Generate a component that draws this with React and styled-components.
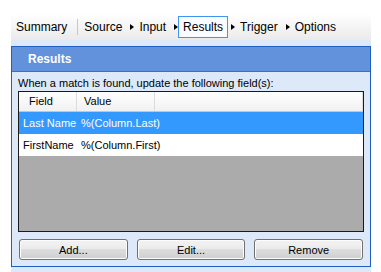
import { Fragment } from "react";
import styled, { createGlobalStyle } from "styled-components";

const GlobalStyle = createGlobalStyle`
  body {
    margin: 0;
    background: #ffffff;
    font-family: "Liberation Sans", Arial, sans-serif;
  }
`;

const Page = styled.div`
  padding: 14px 0 0 11px;
`;

const Frame = styled.div`
  width: 360px;
  height: 258px;
  background: #dde9f8;
  display: flex;
  flex-direction: column;
`;

const Steps = styled.div`
  height: 26px;
  display: flex;
  align-items: center;
  background: linear-gradient(#ffffff, #eaeaea);
  font-size: 12px;
  color: #000000;
`;

const Step = styled.div`
  padding: 3px 4px;
  border: 1px solid ${(p) => (p.$active ? "#3f96f0" : "transparent")};
  background: ${(p) => (p.$active ? "#fafcff" : "transparent")};
  line-height: 14px;
`;

const Divider = styled.span`
  width: 1px;
  height: 16px;
  margin: 0 1px 0 5px;
  background: #c8c8c8;
`;

const Arrow = styled.span`
  width: 0;
  height: 0;
  margin: 0 0 0 3px;
  border-left: 4px solid #000000;
  border-top: 3px solid transparent;
  border-bottom: 3px solid transparent;
`;

const Panel = styled.section`
  margin-top: 6px;
  height: 221px;
  box-sizing: border-box;
  border: 1px solid #1f5fc4;
  display: flex;
  flex-direction: column;
`;

const Header = styled.div`
  height: 24px;
  border-bottom: 1px solid #3c70c8;
  background: #6392dd;
  color: #ffffff;
  font-weight: bold;
  font-size: 12px;
  line-height: 24px;
  padding-left: 16px;
`;

const Note = styled.div`
  font-size: 11px;
  line-height: 14px;
  padding: 4px 6px 1px;
  color: #000000;
`;

const ListBox = styled.div`
  margin: 0 6px;
  height: 139px;
  border: 1px solid #1a1a1a;
  background: #ababab;
  display: flex;
  flex-direction: column;
  font-size: 11px;
`;

const Columns = styled.div`
  display: grid;
  grid-template-columns: 58px 78px 1fr;
`;

const HeadRow = styled(Columns)`
  height: 19px;
  border-bottom: 1px solid #c6c6c6;
  background: linear-gradient(#ffffff, #f1f1f1);
`;

const HeadCell = styled.div`
  line-height: 19px;
  padding-left: ${(p) => p.$indent}px;
  border-right: 1px solid #dcdcdc;
`;

const Row = styled(Columns)`
  height: 22px;
  line-height: 22px;
  background: ${(p) => (p.$selected ? "#3399ff" : "#ffffff")};
  color: ${(p) => (p.$selected ? "#ffffff" : "#000000")};
`;

const Cell = styled.div`
  padding-left: ${(p) => p.$indent}px;
  white-space: nowrap;
`;

const Buttons = styled.div`
  display: grid;
  grid-template-columns: repeat(3, 1fr);
  gap: 9px;
  padding: 7px 7px 0;
`;

const Button = styled.button`
  height: 21px;
  border: 1px solid #707070;
  border-radius: 3px;
  background: linear-gradient(#f3f3f3 0%, #ebebeb 45%, #dddddd 50%, #cfcfcf 100%);
  box-shadow: inset 0 0 0 1px #fcfcfc;
  font-family: "Liberation Sans", Arial, sans-serif;
  font-size: 11px;
  color: #000000;
  padding: 0;
`;

const steps = ["Source", "Input", "Results", "Trigger", "Options"];

const rows = [
  { field: "Last Name", value: "%(Column.Last)", selected: true },
  { field: "FirstName", value: "%(Column.First)", selected: false },
];

export default function App() {
  return (
    <Page>
      <GlobalStyle />
      <Frame>
        <Steps>
          <Step>Summary</Step>
          <Divider />
          {steps.map((name, i) => (
            <Fragment key={name}>
              {i > 0 && <Arrow />}
              <Step $active={name === "Results"}>{name}</Step>
            </Fragment>
          ))}
        </Steps>

        <Panel>
          <Header>Results</Header>
          <Note>When a match is found, update the following field(s):</Note>
          <ListBox>
            <HeadRow>
              <HeadCell $indent={10}>Field</HeadCell>
              <HeadCell $indent={7}>Value</HeadCell>
              <HeadCell $indent={0} />
            </HeadRow>
            {rows.map((row) => (
              <Row key={row.field} $selected={row.selected}>
                <Cell $indent={4}>{row.field}</Cell>
                <Cell $indent={4}>{row.value}</Cell>
                <Cell $indent={0} />
              </Row>
            ))}
          </ListBox>
          <Buttons>
            <Button>Add...</Button>
            <Button>Edit...</Button>
            <Button>Remove</Button>
          </Buttons>
        </Panel>
      </Frame>
    </Page>
  );
}
